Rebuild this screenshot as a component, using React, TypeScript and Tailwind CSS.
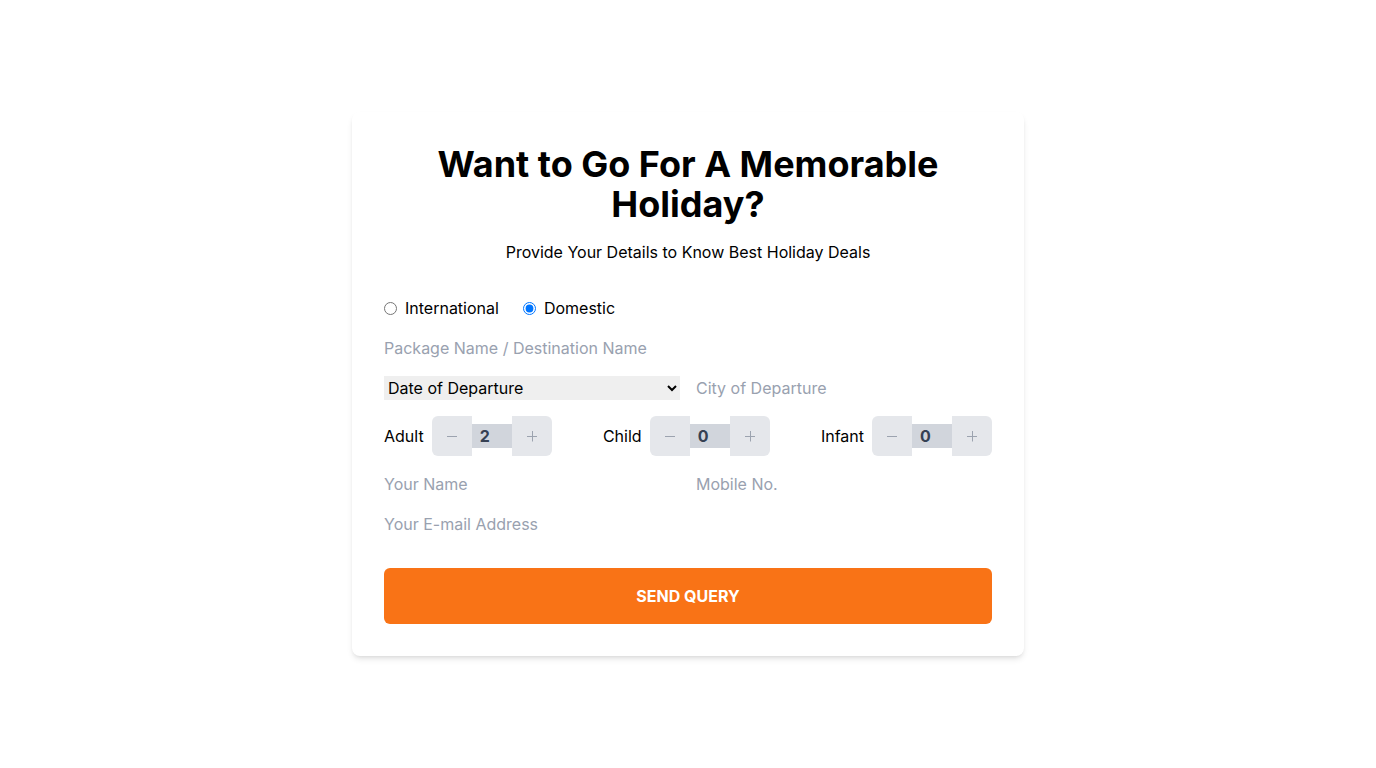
import React, { useState } from "react";

function Minus() {
  return (
    <svg width="12" height="12" viewBox="0 0 12 12">
      <line x1="1" y1="6.5" x2="11" y2="6.5" stroke="#9ca3af" strokeWidth="1" />
    </svg>
  );
}

function Plus() {
  return (
    <svg width="12" height="12" viewBox="0 0 12 12">
      <line x1="1" y1="6.5" x2="11" y2="6.5" stroke="#9ca3af" strokeWidth="1" />
      <line x1="6.5" y1="1" x2="6.5" y2="11.5" stroke="#9ca3af" strokeWidth="1" />
    </svg>
  );
}

function Counter({ label, initial }: { label: string; initial: number }) {
  const [v, setV] = useState(initial);
  return (
    <div className="flex items-center gap-2">
      <span className="text-base text-black">{label}</span>
      <div className="flex items-center h-10">
        <button
          type="button"
          onClick={() => setV(Math.max(0, v - 1))}
          className="w-10 h-10 bg-gray-200 rounded-l-md flex items-center justify-center"
        >
          <Minus />
        </button>
        <input
          readOnly
          value={v}
          className="w-10 h-6 bg-gray-300 pl-2 font-bold text-gray-700 outline-none text-base"
        />
        <button
          type="button"
          onClick={() => setV(v + 1)}
          className="w-10 h-10 bg-gray-200 rounded-r-md flex items-center justify-center"
        >
          <Plus />
        </button>
      </div>
    </div>
  );
}

export default function App() {
  const [type, setType] = useState("domestic");
  return (
    <div
      className="min-h-screen flex items-center justify-center bg-white"
      style={{ fontFamily: "Inter, 'Noto Sans', sans-serif" }}
    >
      <div className="w-[672px] bg-white rounded-lg shadow-md p-8">
        <h1 className="text-4xl font-bold text-center text-black leading-10">
          Want to Go For A Memorable Holiday?
        </h1>
        <p className="text-base text-center text-black mt-4 leading-6">
          Provide Your Details to Know Best Holiday Deals
        </p>
        <form className="mt-8 flex flex-col gap-4" onSubmit={(e) => e.preventDefault()}>
          <div className="flex items-center gap-6 h-6">
            <label className="flex items-center gap-2 text-base text-black">
              <input
                type="radio"
                name="type"
                checked={type === "international"}
                onChange={() => setType("international")}
              />
              International
            </label>
            <label className="flex items-center gap-2 text-base text-black">
              <input
                type="radio"
                name="type"
                checked={type === "domestic"}
                onChange={() => setType("domestic")}
              />
              Domestic
            </label>
          </div>
          <input
            className="w-full h-6 text-base outline-none placeholder:text-gray-400"
            placeholder="Package Name / Destination Name"
          />
          <div className="grid grid-cols-2 gap-4">
            <select className="h-6 bg-[#efefef] text-base text-black outline-none">
              <option>Date of Departure</option>
            </select>
            <input
              className="h-6 text-base outline-none placeholder:text-gray-400"
              placeholder="City of Departure"
            />
          </div>
          <div className="flex items-center justify-between">
            <Counter label="Adult" initial={2} />
            <Counter label="Child" initial={0} />
            <Counter label="Infant" initial={0} />
          </div>
          <div className="grid grid-cols-2 gap-4">
            <input
              className="h-6 text-base outline-none placeholder:text-gray-400"
              placeholder="Your Name"
            />
            <input
              className="h-6 text-base outline-none placeholder:text-gray-400"
              placeholder="Mobile No."
            />
          </div>
          <input
            className="h-6 text-base outline-none placeholder:text-gray-400"
            placeholder="Your E-mail Address"
          />
          <button
            type="submit"
            className="mt-4 w-full bg-[#f97316] text-white font-bold uppercase py-4 rounded-md text-base leading-6"
          >
            Send Query
          </button>
        </form>
      </div>
    </div>
  );
}
